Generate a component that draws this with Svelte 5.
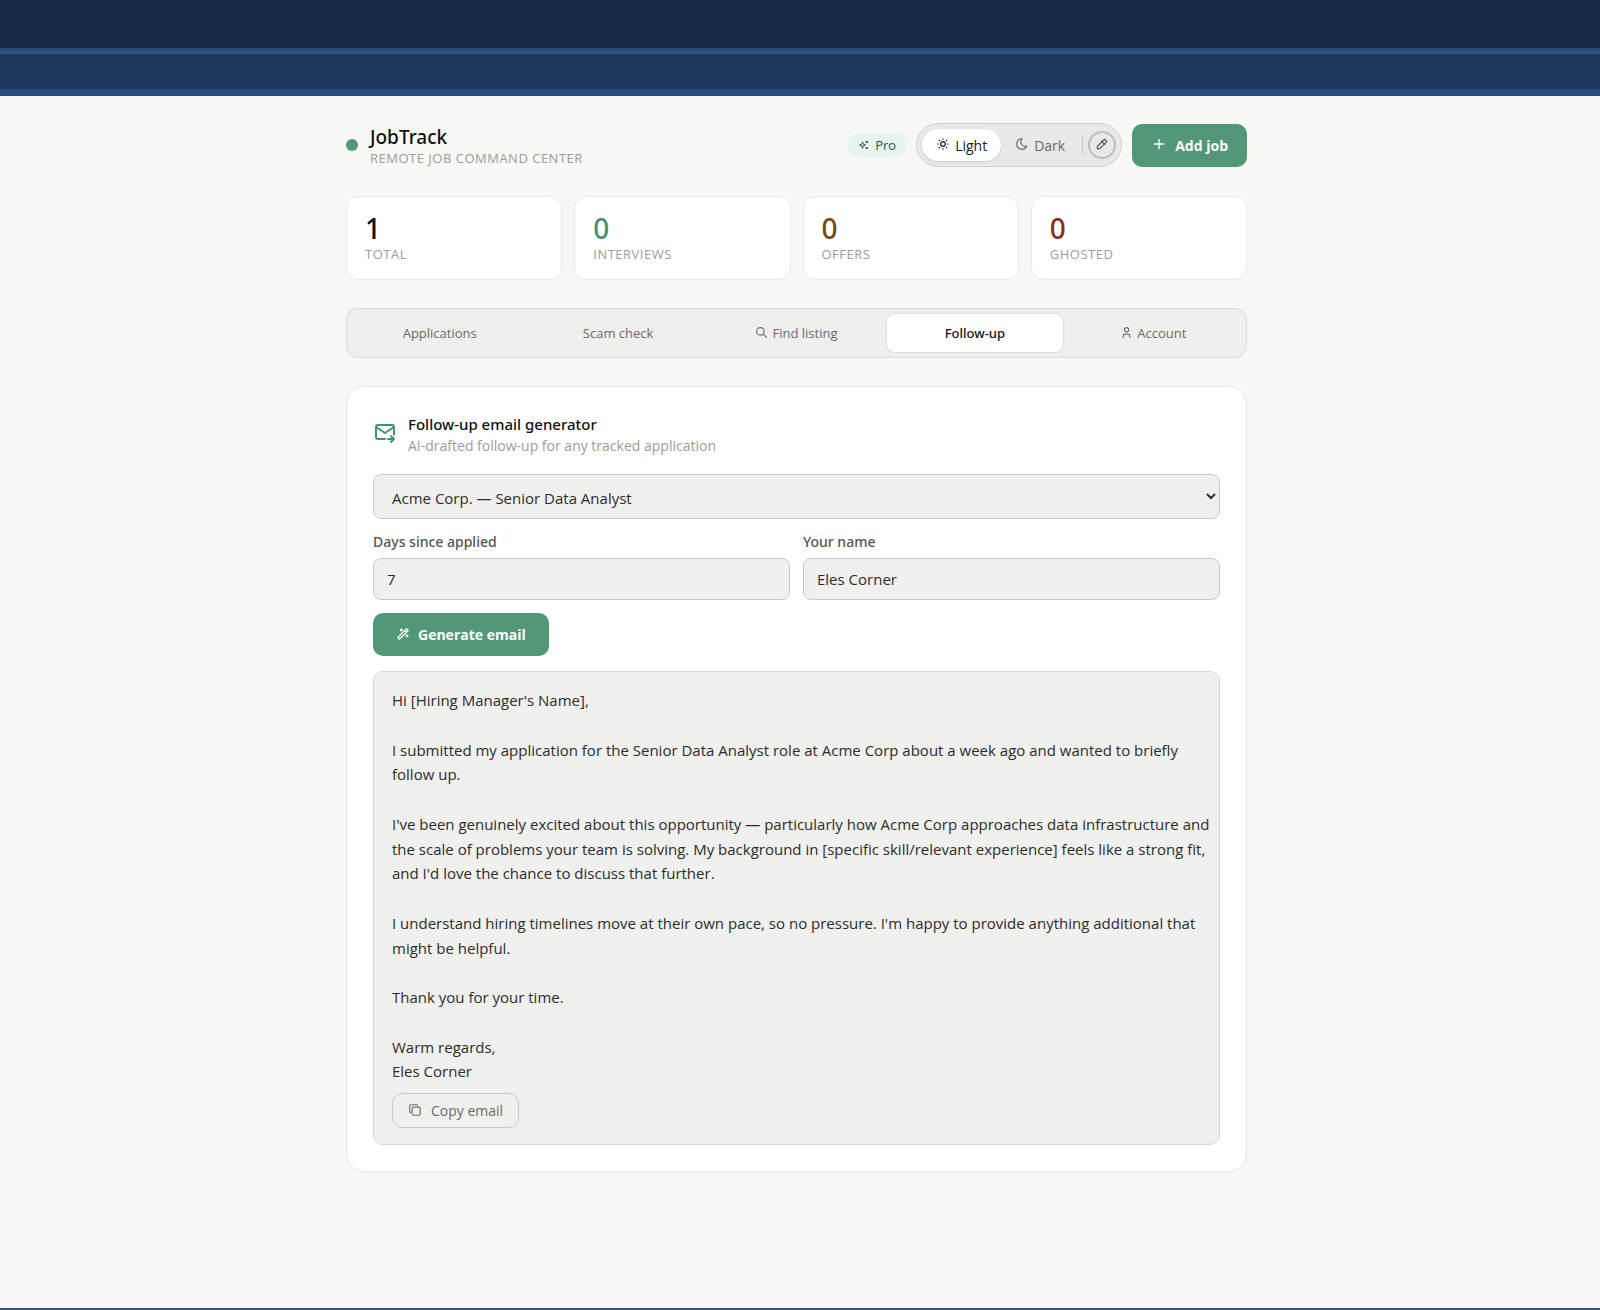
<script>
    const icons = {
        sparkles: 'M16 18a2 2 0 0 1 2 2a2 2 0 0 1 2 -2a2 2 0 0 1 -2 -2a2 2 0 0 1 -2 2zm0 -12a2 2 0 0 1 2 2a2 2 0 0 1 2 -2a2 2 0 0 1 -2 -2a2 2 0 0 1 -2 2zm-7 12a6 6 0 0 1 6 -6a6 6 0 0 1 -6 -6a6 6 0 0 1 -6 6a6 6 0 0 1 6 6z',
        sun: 'M8 12a4 4 0 1 0 8 0a4 4 0 1 0 -8 0M3 12h1m8 -9v1m8 8h1m-9 8v1m-6.4 -15.4l.7 .7m12.1 -.7l-.7 .7m0 11.4l.7 .7m-12.1 -.7l-.7 .7',
        moon: 'M12 3c.132 0 .263 0 .393 0a7.5 7.5 0 0 0 7.92 12.446a9 9 0 1 1 -8.313 -12.454z',
        picker: 'M11 7l6 6M4 16l11.7 -11.7a1 1 0 0 1 1.4 0l2.6 2.6a1 1 0 0 1 0 1.4l-11.7 11.7h-4v-4z',
        plus: 'M12 5v14M5 12h14',
        search: 'M3 10a7 7 0 1 0 14 0a7 7 0 1 0 -14 0M21 21l-6 -6',
        user: 'M8 7a4 4 0 1 0 8 0a4 4 0 0 0 -8 0M6 21v-2a4 4 0 0 1 4 -4h4a4 4 0 0 1 4 4v2',
        mail: 'M12 18h-7a2 2 0 0 1 -2 -2v-10a2 2 0 0 1 2 -2h14a2 2 0 0 1 2 2v7.5M3 6l9 6l9 -6M15 18h6M18 15l3 3l-3 3',
        wand: 'M6 21l15 -15l-3 -3l-15 15l3 3M15 6l3 3M9 3a2 2 0 0 0 2 2a2 2 0 0 0 -2 2a2 2 0 0 0 -2 -2a2 2 0 0 0 2 -2M19 13a2 2 0 0 0 2 2a2 2 0 0 0 -2 2a2 2 0 0 0 -2 -2a2 2 0 0 0 2 -2',
        copy: 'M7 9.667a2.667 2.667 0 0 1 2.667 -2.667h8.666a2.667 2.667 0 0 1 2.667 2.667v8.666a2.667 2.667 0 0 1 -2.667 2.667h-8.666a2.667 2.667 0 0 1 -2.667 -2.667zM4.012 16.737a2.005 2.005 0 0 1 -1.012 -1.737v-10c0 -1.1 .9 -2 2 -2h10c.75 0 1.158 .385 1.5 1'
    }

    const stats = [
        {value: 1, label: 'Total', tone: 'dark'},
        {value: 0, label: 'Interviews', tone: 'green'},
        {value: 0, label: 'Offers', tone: 'brown'},
        {value: 0, label: 'Ghosted', tone: 'red'}
    ]

    const tabs = [
        {name: 'Applications'},
        {name: 'Scam check'},
        {name: 'Find listing', icon: 'search'},
        {name: 'Follow-up'},
        {name: 'Account', icon: 'user'}
    ]

    let activeTab = $state('Follow-up')
    let theme = $state('light')
    let job = $state('Acme Corp. — Senior Data Analyst')
    let days = $state('7')
    let name = $state('Eles Corner')

    const email = `Hi [Hiring Manager's Name],

I submitted my application for the Senior Data Analyst role at Acme Corp about a week ago and wanted to briefly follow up.

I've been genuinely excited about this opportunity — particularly how Acme Corp approaches data infrastructure and the scale of problems your team is solving. My background in [specific skill/relevant experience] feels like a strong fit, and I'd love the chance to discuss that further.

I understand hiring timelines move at their own pace, so no pressure. I'm happy to provide anything additional that might be helpful.

Thank you for your time.

Warm regards,
Eles Corner`
</script>

{#snippet icon(id, size)}
    <svg width={size} height={size} viewBox="0 0 24 24" aria-hidden="true"><path d={icons[id]} /></svg>
{/snippet}

<div class="page">
    <div class="band top"></div>
    <div class="band lower"></div>

    <div class="content">
        <main>
            <header>
                <div class="brand">
                    <span class="dot"></span>
                    <div>
                        <h1>JobTrack</h1>
                        <p>Remote job command center</p>
                    </div>
                </div>
                <div class="actions">
                    <span class="pro">{@render icon('sparkles', 12)} Pro</span>
                    <div class="theme">
                        <button class:on={theme === 'light'} onclick={() => theme = 'light'}>{@render icon('sun', 14)} Light</button>
                        <button class:on={theme === 'dark'} onclick={() => theme = 'dark'}>{@render icon('moon', 14)} Dark</button>
                        <span class="divider"></span>
                        <button class="picker" aria-label="Pick a colour">{@render icon('picker', 14)}</button>
                    </div>
                    <button class="primary">{@render icon('plus', 16)} Add job</button>
                </div>
            </header>

            <section class="stats">
                {#each stats as stat}
                <div class="stat">
                    <strong class={stat.tone}>{stat.value}</strong>
                    <span>{stat.label}</span>
                </div>
                {/each}
            </section>

            <nav>
                {#each tabs as tab}
                <button class:active={activeTab === tab.name} onclick={() => activeTab = tab.name}>
                    {#if tab.icon}{@render icon(tab.icon, 13)}{/if}
                    {tab.name}
                </button>
                {/each}
            </nav>

            <section class="panel">
                <div class="panel-head">
                    {@render icon('mail', 24)}
                    <div>
                        <h2>Follow-up email generator</h2>
                        <p>AI-drafted follow-up for any tracked application</p>
                    </div>
                </div>

                <select aria-label="Application" bind:value={job}>
                    <option>Acme Corp. — Senior Data Analyst</option>
                </select>

                <div class="fields">
                    <div>
                        <label for="days">Days since applied</label>
                        <input id="days" type="text" inputmode="numeric" bind:value={days}>
                    </div>
                    <div>
                        <label for="name">Your name</label>
                        <input id="name" type="text" bind:value={name}>
                    </div>
                </div>

                <button class="primary generate">{@render icon('wand', 14)} Generate email</button>

                <div class="result">
                    <div class="email">{email}</div>
                    <button class="copy">{@render icon('copy', 14)} Copy email</button>
                </div>
            </section>
        </main>
    </div>
</div>

<style>
    :global(body) {
        background: #f8f8f6;
    }

    .page {
        display: flex;
        flex-direction: column;
        min-height: 100vh;
        box-sizing: border-box;
        border-bottom: 2px solid #37507f;
        font-family: "Open Sans", "Noto Sans", sans-serif;
        font-size: 14px;
        color: #2c2c2a;
    }

    .band {
        height: 35px;
        background: #1f395e;
        border-top: 2px solid #3c5378;
        border-bottom: 7px solid #2a4b7c;
    }

    .band.top {
        height: 48px;
        background: #162a44;
        border-top: 0;
        border-bottom-width: 4px;
    }

    .content {
        padding: 26px 27px 40px 20px;
    }

    main {
        max-width: 901px;
        margin: 0 auto;
    }

    h1, h2, p {
        margin: 0;
        font-weight: 400;
    }

    button, input, select {
        font: inherit;
        color: inherit;
        margin: 0;
    }

    button {
        display: inline-flex;
        align-items: center;
        justify-content: center;
        padding: 0;
        border: 0;
        background: none;
        cursor: pointer;
    }

    svg {
        flex: none;
        fill: none;
        stroke: currentColor;
        stroke-width: 2;
        stroke-linecap: round;
        stroke-linejoin: round;
    }

    button svg {
        margin-bottom: 2px;
    }

    header {
        display: flex;
        align-items: center;
        justify-content: space-between;
        margin-bottom: 28px;
    }

    .brand, .actions, .theme {
        display: flex;
        align-items: center;
    }

    .brand {
        gap: 12px;
    }

    .dot {
        width: 12px;
        height: 12px;
        border-radius: 50%;
        background: #529878;
    }

    h1 {
        padding-top: 4px;
        font-family: "Noto Sans", sans-serif;
        font-size: 19px;
        line-height: 22px;
        font-weight: 500;
        color: #111;
    }

    .brand p {
        font-size: 13px;
        line-height: 20px;
        letter-spacing: 0.5px;
        text-transform: uppercase;
        color: #9c9c98;
    }

    .actions {
        gap: 10px;
    }

    .pro {
        display: inline-flex;
        align-items: center;
        gap: 5px;
        height: 24px;
        padding: 0 10px;
        border-radius: 12px;
        background: #e5f4ee;
        font-size: 13px;
        color: #2d5548;
    }

    .theme {
        padding: 5px;
        border: 1px solid #d0d0ce;
        border-radius: 22px;
        background: #e9e9e7;
        color: #6b6b68;
    }

    .theme button {
        gap: 5px;
        height: 32px;
        padding: 0 14px;
        border-radius: 16px;
    }

    .theme button.on {
        background: #fff;
        box-shadow: 0 1px 3px rgba(0, 0, 0, 0.12);
        color: #1b1b1a;
    }

    .divider {
        width: 1px;
        height: 19px;
        margin: 0 5px 0 3px;
        background: #cacac8;
    }

    .theme .picker {
        width: 28px;
        height: 28px;
        padding: 0;
        border: 2px solid #bebebc;
        border-radius: 50%;
        color: #555;
    }

    .primary {
        gap: 8px;
        height: 43px;
        padding: 0 19px;
        border-radius: 10px;
        background: #529878;
        color: #fff;
        font-weight: 700;
    }

    .stats {
        display: grid;
        grid-template-columns: repeat(4, 1fr);
        gap: 12px;
        margin-bottom: 28px;
    }

    .stat {
        display: flex;
        flex-direction: column;
        padding: 15px 18px;
        border: 1px solid #e9e9e7;
        border-radius: 12px;
        background: #fff;
    }

    .stat strong {
        font-family: "Noto Sans", sans-serif;
        font-size: 28px;
        line-height: 32px;
        font-weight: 500;
    }

    .stat span {
        font-size: 13px;
        line-height: 20px;
        letter-spacing: 0.5px;
        text-transform: uppercase;
        color: #9c9c98;
    }

    .dark { color: #111; }
    .green { color: #46906f; }
    .brown { color: #75481a; }
    .red { color: #8a2c22; }

    nav {
        display: grid;
        grid-template-columns: repeat(5, 1fr);
        gap: 3px;
        padding: 5px;
        margin-bottom: 28px;
        border: 1px solid #dadad8;
        border-radius: 12px;
        background: #efefed;
    }

    nav button {
        gap: 4px;
        height: 38px;
        border-radius: 8px;
        font-size: 13px;
        color: #6b6b68;
    }

    nav button.active {
        background: #fff;
        box-shadow: 0 0 2px rgba(0, 0, 0, 0.25);
        color: #111;
        font-family: "Noto Sans", sans-serif;
        font-weight: 500;
    }

    .panel {
        padding: 26px;
        border: 1px solid #e6e6e4;
        border-radius: 18px;
        background: #fff;
    }

    .panel-head {
        display: flex;
        align-items: flex-start;
        gap: 11px;
        margin-bottom: 18px;
        color: #46906f;
    }

    .panel-head svg {
        margin-top: 8px;
    }

    h2 {
        font-family: "Noto Sans", sans-serif;
        font-size: 15px;
        line-height: 22px;
        font-weight: 500;
        color: #111;
    }

    .panel-head p {
        line-height: 21px;
        color: #9c9c98;
    }

    select, input {
        display: block;
        width: 100%;
        box-sizing: border-box;
        border: 1px solid #c9c9c9;
        border-radius: 8px;
        background: #f0f0ee;
        font-size: 15px;
    }

    select {
        height: 45px;
        padding: 3px 14px 0;
        margin-bottom: 13px;
    }

    input {
        height: 42px;
        padding: 0 13px;
    }

    .fields {
        display: grid;
        grid-template-columns: 1fr 1fr;
        gap: 13px;
        margin-bottom: 13px;
    }

    label {
        display: block;
        margin-bottom: 6px;
        font-family: "Noto Sans", sans-serif;
        line-height: 20px;
        font-weight: 500;
        color: #555552;
    }

    .generate {
        padding: 0 23px;
    }

    .result {
        margin-top: 15px;
        padding: 16px 8px 16px 18px;
        border: 1px solid #d6d6d4;
        border-radius: 10px;
        background: #f0f0ee;
    }

    .email {
        font-size: 15px;
        line-height: 1.65;
        white-space: pre-wrap;
    }

    .copy {
        gap: 9px;
        height: 35px;
        margin-top: 9px;
        padding: 0 15px;
        border: 1px solid #c9c9c9;
        border-radius: 10px;
        color: #6b6b68;
    }
</style>
